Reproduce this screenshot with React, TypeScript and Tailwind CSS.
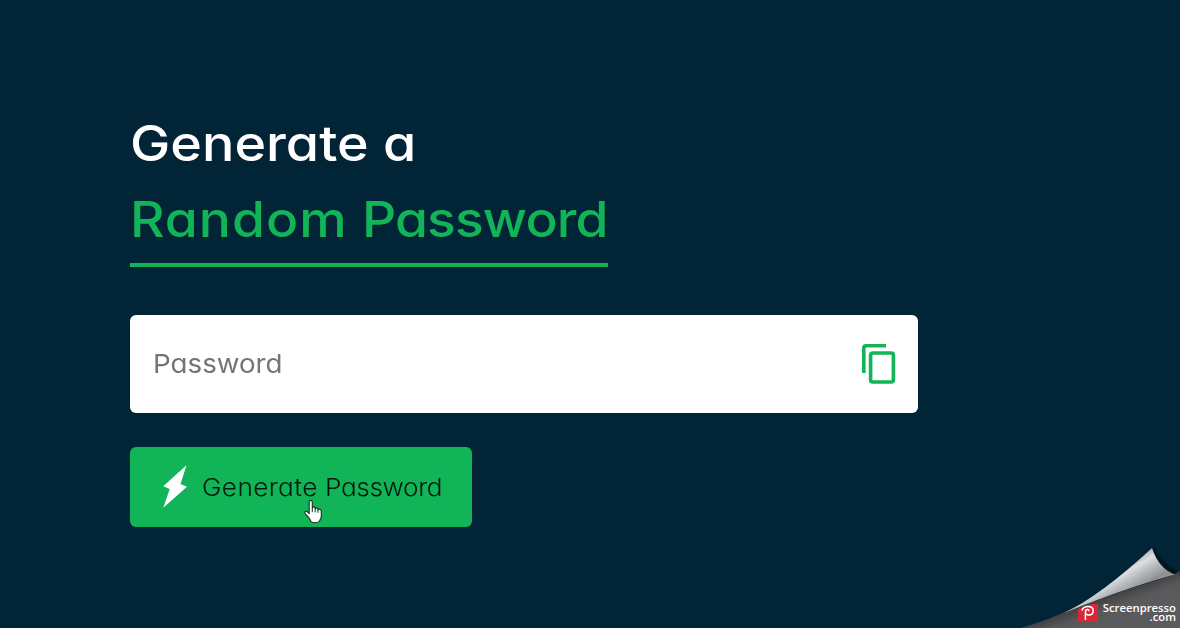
import React from "react";

function CopyIcon() {
  return (
    <svg width="34" height="41" viewBox="0 0 34 41" fill="none" stroke="#12b458" strokeWidth="3.6" aria-hidden="true">
      <path d="M24 1.8H4.2Q1.8 1.8 1.8 4.2V29" />
      <rect x="8.6" y="9" width="22.8" height="29" rx="2.2" />
    </svg>
  );
}

function BoltIcon() {
  return (
    <svg className="mb-[1px]" width="24" height="43" viewBox="0 0 24 43" fill="#ffffff" aria-hidden="true">
      <path d="M23.5 0.3L0.2 21.2L6.7 24L0.3 42.7L24 21.8L17.5 19Z" />
    </svg>
  );
}

function HandCursor() {
  return (
    <svg className="absolute left-[174px] top-[52px]" width="20" height="26" viewBox="0 0 20 26" aria-hidden="true">
      <path
        d="M5.2 3.1Q5.2 1.4 6.7 1.4T8.3 3.1V9.2Q8.6 7.8 9.8 7.9T11.2 9.4V10Q11.6 8.7 12.7 8.9T14 10.4V11Q14.5 9.8 15.5 10.1T17.3 11.8V17.2Q17.3 20 15.7 21.4V22.4Q13.4 23.8 10.8 23.8T6.8 22.4Q5.8 19.7 4 17.7L1.2 14.6Q0.5 13.2 1.5 12.5T3.6 13L5.2 14.6Z"
        fill="#fff"
        stroke="#17301f"
        strokeWidth="1.1"
        strokeLinejoin="round"
      />
      <path d="M8.3 9V13.2M11.2 10V13.4M14 11V13.8" stroke="#17301f" strokeWidth="1" fill="none" />
    </svg>
  );
}

function PageCurl() {
  return (
    <div className="absolute right-0 bottom-0 h-[98px] w-[180px] overflow-hidden">
      <svg className="absolute inset-0" width="180" height="98" viewBox="0 0 180 98" aria-hidden="true">
        <defs>
          <linearGradient id="fold" gradientUnits="userSpaceOnUse" x1="116" y1="38" x2="131" y2="63">
            <stop offset="0" stopColor="#a9acaf" />
            <stop offset="0.3" stopColor="#dcdee0" />
            <stop offset="0.65" stopColor="#b4b7ba" />
            <stop offset="1" stopColor="#8f9295" />
          </linearGradient>
          <linearGradient id="under" gradientUnits="userSpaceOnUse" x1="120" y1="62" x2="128" y2="84">
            <stop offset="0" stopColor="#414143" />
            <stop offset="0.5" stopColor="#58585a" />
            <stop offset="1" stopColor="#5b5a5c" />
          </linearGradient>
          <filter id="soft" x="-20%" y="-20%" width="140%" height="140%">
            <feGaussianBlur stdDeviation="1.5" />
          </filter>
        </defs>
        <path d="M152 17Q162 36 179 43L174 47L150 24Z" fill="#00080f" filter="url(#soft)" />
        <path d="M20 98Q48 91 77 76L173 45L180 41V98Z" fill="url(#under)" />
        <path d="M64 83Q100 66 152 18Q159 39 175 44.5Q158 49 134 57Q100 68 64 83Z" fill="url(#fold)" />
      </svg>
      <svg className="absolute left-[78px] top-[74px]" width="20" height="18" viewBox="0 0 20 18" aria-hidden="true">
        <path d="M0 5L14 0H20V18H0Z" fill="#dc2638" />
        <path d="M4 6.5Q5 2.5 10 2.5Q15.2 2.5 15.2 6.8Q15.2 11 11 11Q7.4 11 7.4 8Q7.4 5.6 9.5 5.6Q11 5.6 11 7.3M7.4 9V16" fill="none" stroke="#fff" strokeWidth="1.5" />
      </svg>
      <div className="absolute right-[4px] top-[73px] text-right font-['Open_Sans',sans-serif] text-[11.3px] leading-[9px] font-semibold text-white">
        <div>Screenpresso</div>
        <div>.com</div>
      </div>
    </div>
  );
}

export default function App() {
  return (
    <main className="relative h-[628px] w-full overflow-hidden bg-[#022437] pt-[106px] pl-[130px] font-['Inter','Open_Sans',sans-serif] [font-feature-settings:'cv11']">
      <h1 className="flex flex-col items-start text-[49px] leading-[76px] font-medium whitespace-nowrap">
        <span className="origin-left scale-x-[1.1] text-white">Generate a</span>
        <span className="h-[85px] w-[478px] border-b-4 border-[#12b458] text-[#12b458]">
          <span className="inline-block origin-left scale-x-[1.09]">
            <span className="tracking-[0.9px]">Random</span>{" "}
            <span className="tracking-[-0.8px]">Password</span>
          </span>
        </span>
      </h1>
      <div className="mt-12 flex h-[98px] w-[788px] items-center justify-between rounded-[6px] bg-white pr-[22px] pl-[23px]">
        <input
          className="mb-[2px] w-[400px] origin-left scale-x-[1.066] bg-transparent text-[26px] text-[#757575] outline-none placeholder:text-[#757575] placeholder:opacity-100"
          placeholder="Password"
          aria-label="Password"
        />
        <button aria-label="Copy password"><CopyIcon /></button>
      </div>
      <button className="relative mt-[34px] flex h-20 w-[342px] items-center gap-[15px] rounded-[6px] bg-[#12b458] pl-[33px] text-[24px] font-[270] whitespace-nowrap text-[#04190e]">
        <BoltIcon />
        <span className="origin-left scale-x-[1.09] pt-[2px]">
          <span className="tracking-[0.35px]">Generate</span>{" "}
          <span className="tracking-[-0.35px]">Password</span>
        </span>
        <HandCursor />
      </button>
      <PageCurl />
    </main>
  );
}
